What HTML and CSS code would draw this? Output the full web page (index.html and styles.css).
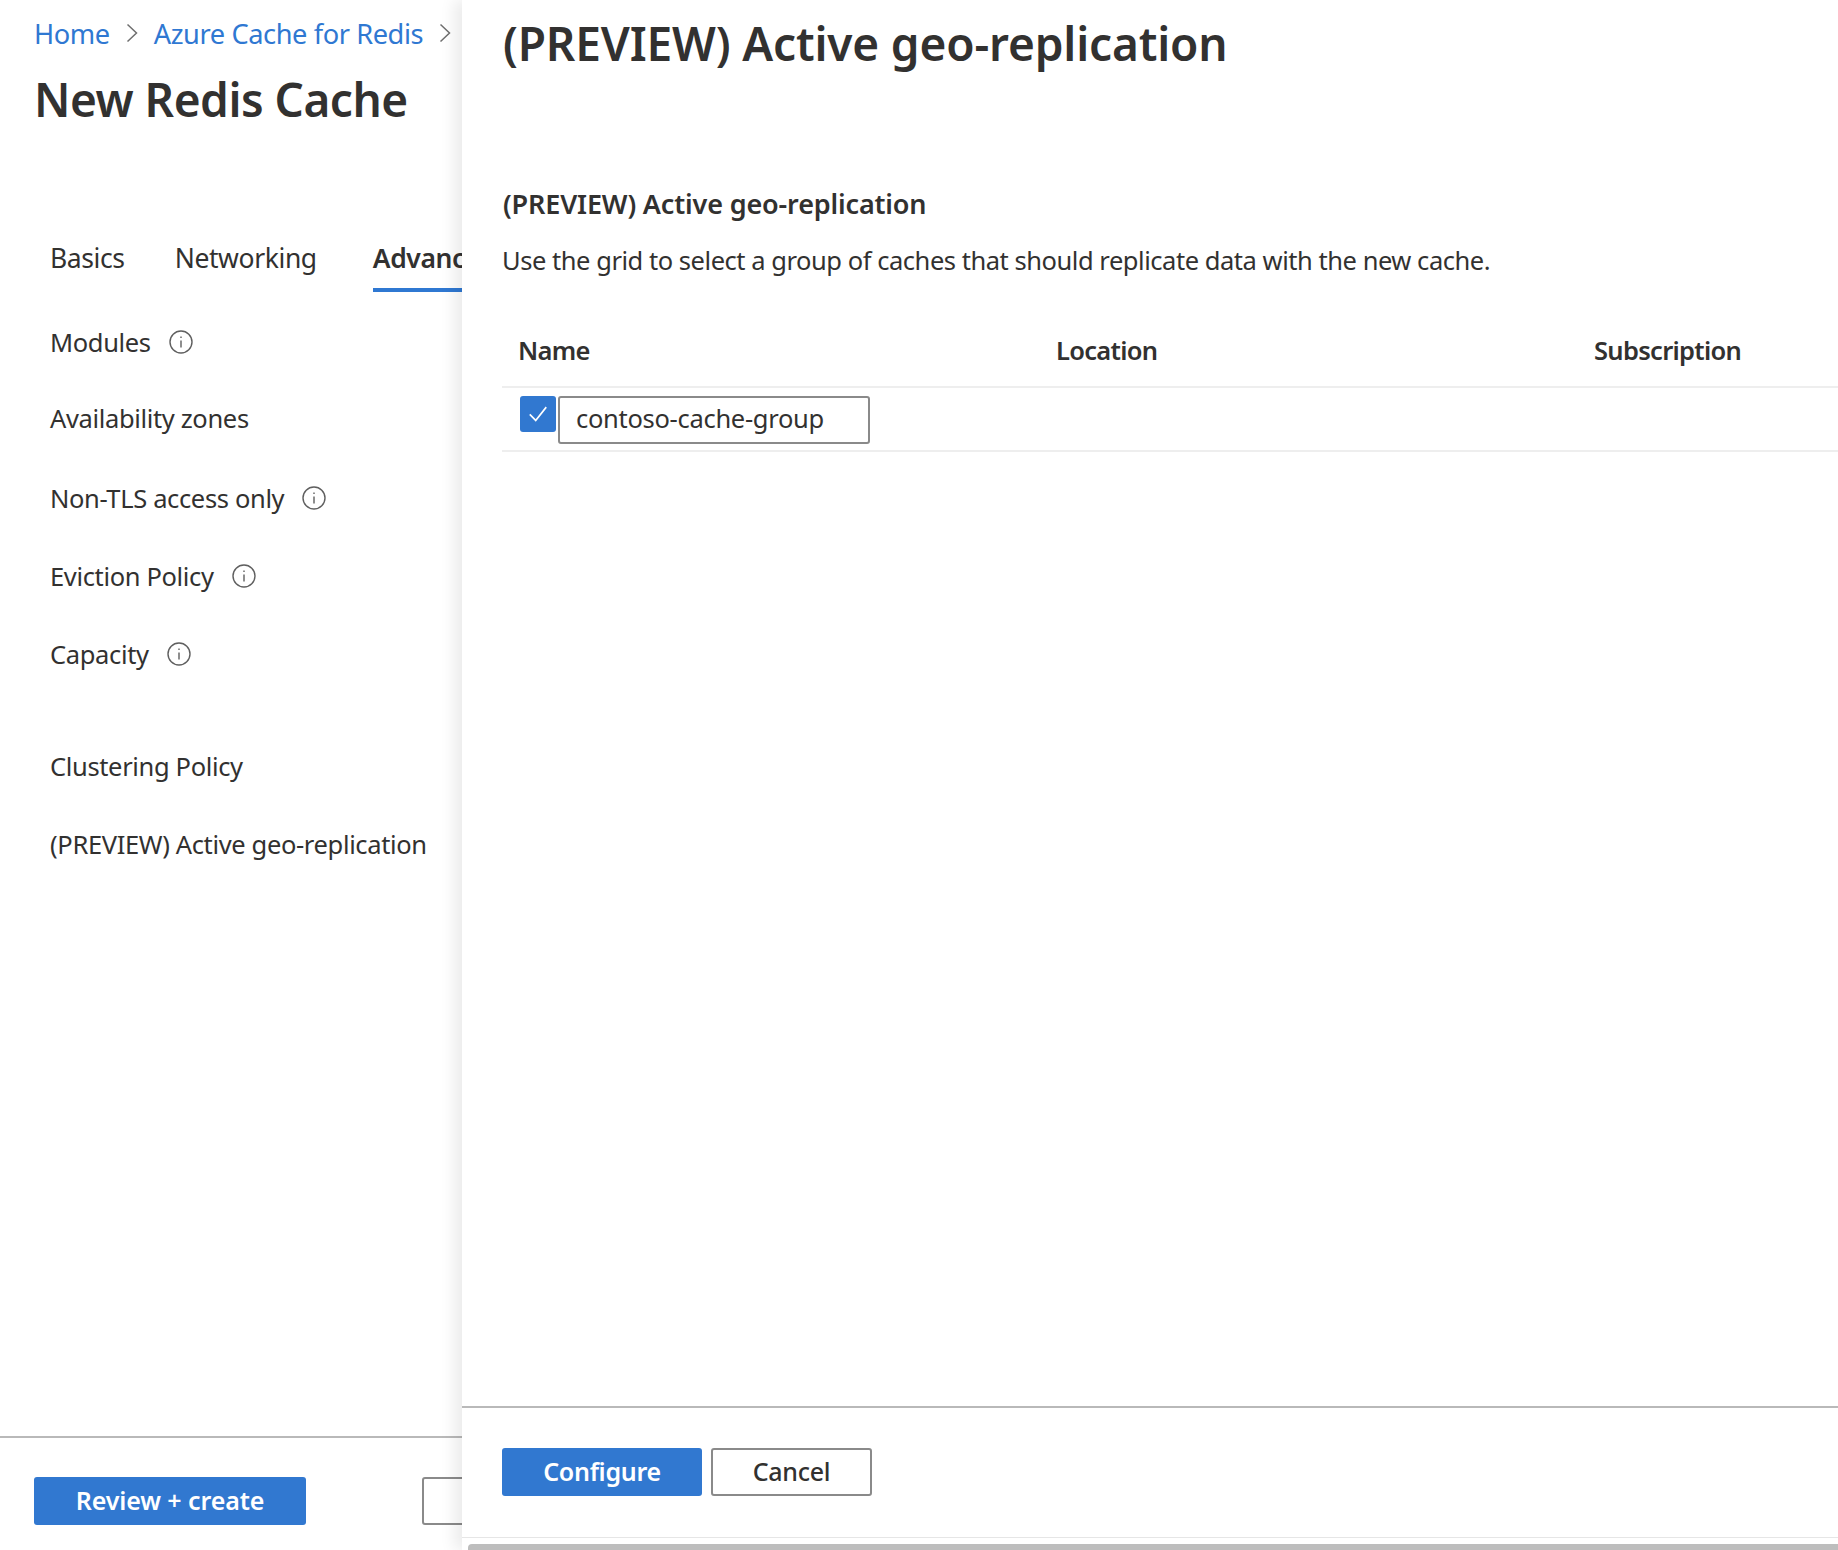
FILE: index.html
```html
<!DOCTYPE html>
<html lang="en">
<head>
<meta charset="utf-8">
<title>New Redis Cache</title>
<link rel="stylesheet" href="styles.css">
</head>
<body>
<div class="page">
  <main class="blade">
    <nav class="crumbs">
      <a class="crumb">Home</a>
      <svg class="chev" viewBox="0 0 12 20"><path d="M1.5 1.5 10.5 10 1.5 18.5"/></svg>
      <a class="crumb">Azure Cache for Redis</a>
      <svg class="chev" viewBox="0 0 12 20"><path d="M1.5 1.5 10.5 10 1.5 18.5"/></svg>
    </nav>
    <h1 class="title">New Redis Cache</h1>
    <div class="tabs">
      <span class="tab">Basics</span>
      <span class="tab">Networking</span>
      <span class="tab tab-on">Advanced</span>
    </div>
    <div class="fields">
      <div class="field field-short"><span>Modules</span><svg class="info" viewBox="0 0 24 24"><circle cx="12" cy="12" r="11"/><path d="M12 10.5v7M12 6.5v1.6"/></svg></div>
      <div class="field field-long"><span>Availability zones</span></div>
      <div class="field"><span>Non-TLS access only</span><svg class="info" viewBox="0 0 24 24"><circle cx="12" cy="12" r="11"/><path d="M12 10.5v7M12 6.5v1.6"/></svg></div>
      <div class="field"><span>Eviction Policy</span><svg class="info" viewBox="0 0 24 24"><circle cx="12" cy="12" r="11"/><path d="M12 10.5v7M12 6.5v1.6"/></svg></div>
      <div class="field field-gap"><span>Capacity</span><svg class="info" viewBox="0 0 24 24"><circle cx="12" cy="12" r="11"/><path d="M12 10.5v7M12 6.5v1.6"/></svg></div>
      <div class="field"><span>Clustering Policy</span></div>
      <div class="field"><span>(PREVIEW) Active geo-replication</span></div>
    </div>
    <footer class="blade-foot">
      <button class="btn btn-primary btn-review">Review + create</button>
      <button class="btn btn-plain btn-prev"></button>
    </footer>
  </main>
  <aside class="panel">
    <h2 class="panel-title">(PREVIEW) Active geo-replication</h2>
    <div class="panel-body">
      <h3 class="section">(PREVIEW) Active geo-replication</h3>
      <p class="desc">Use the grid to select a group of caches that should replicate data with the new cache.</p>
      <div class="grid-head">
        <span>Name</span><span>Location</span><span>Subscription</span>
      </div>
      <div class="grid-row">
        <span class="check"><svg viewBox="0 0 24 24"><path d="M3 12.5 9.5 19 21 4.5"/></svg></span>
        <span class="name-box">contoso-cache-group</span>
      </div>
    </div>
    <footer class="panel-foot">
      <button class="btn btn-primary btn-configure">Configure</button>
      <button class="btn btn-plain btn-cancel">Cancel</button>
    </footer>
    <div class="scroll"><div class="thumb"></div></div>
  </aside>
</div>
</body>
</html>
```
FILE: styles.css
```css
* { box-sizing: border-box; }
html, body { margin: 0; padding: 0; }
body {
  background: #fff;
  color: #323130;
  font-family: "Noto Sans", "Open Sans", sans-serif;
  font-size: 24px;
  overflow: hidden;
}
.page {
  position: relative;
  width: 1838px;
  height: 1550px;
  overflow: hidden;
}
.blade {
  display: flex;
  flex-direction: column;
  width: 480px;
  height: 1550px;
  overflow: hidden;
}
.crumbs {
  display: flex;
  align-items: center;
  gap: 16px;
  height: 34px;
  margin: 16px 0 0 34px;
  white-space: nowrap;
}
.crumb { color: #2f78d2; font-size: 27.2px; letter-spacing: -0.4px; }
.chev { width: 12px; height: 20px; flex: none; }
.chev path { fill: none; stroke: #6e6e6e; stroke-width: 1.5; }
.title {
  margin: 20px 0 0 34px;
  height: 58px;
  line-height: 58px;
  font-size: 46px;
  font-weight: 600;
  letter-spacing: -0.5px;
  white-space: nowrap;
}
.tabs {
  display: flex;
  gap: 50px;
  height: 60px;
  margin: 104px 0 0 50px;
  white-space: nowrap;
}
.tab {
  height: 60px;
  padding-top: 8px;
  font-size: 26.5px;
  letter-spacing: -0.4px;
}
.tab-on {
  margin-left: 6px;
  font-weight: 600;
  border-bottom: 4px solid #2f78d2;
}
.fields {
  display: flex;
  flex-direction: column;
  margin: 28px 0 0 50px;
  flex: 1;
}
.field {
  display: flex;
  align-items: center;
  gap: 18px;
  height: 44px;
  margin-bottom: 34px;
  font-size: 25.5px;
  letter-spacing: -0.35px;
  white-space: nowrap;
}
.field-short { margin-bottom: 32px; }
.field-long { margin-bottom: 36px; }
.field-gap { margin-bottom: 68px; }
.info { width: 24px; height: 24px; flex: none; }
.info circle, .info path { fill: none; stroke: #5f5f5f; stroke-width: 1.4; }
.blade-foot {
  display: flex;
  gap: 116px;
  height: 114px;
  padding: 39px 0 0 34px;
  border-top: 2px solid #b9b9b9;
  flex: none;
}
.btn {
  height: 48px;
  border-radius: 3px;
  font: inherit;
  font-size: 25px;
  letter-spacing: -0.3px;
  padding: 0 0 3px;
  flex: none;
}
.btn-primary {
  background: #3178d0;
  border: 0;
  color: #fff;
  font-weight: 600;
}
.btn-plain {
  background: #fff;
  border: 2px solid #8a8a8a;
  color: #323130;
  font-weight: 500;
}
.btn-review { width: 272px; letter-spacing: -0.1px; }
.btn-prev { width: 120px; }
.panel {
  position: absolute;
  left: 462px;
  top: 0;
  width: 1376px;
  height: 1550px;
  background: #fff;
  box-shadow: -8px 0 14px rgba(0, 0, 0, 0.08);
  display: flex;
  flex-direction: column;
}
.panel-title {
  margin: 10px 0 0 41px;
  height: 66px;
  line-height: 66px;
  font-size: 46px;
  font-weight: 600;
  letter-spacing: -0.16px;
  white-space: nowrap;
}
.panel-body {
  flex: 1;
  margin-left: 40px;
  padding-top: 110px;
}
.section {
  margin: 0 0 0 1px;
  height: 36px;
  line-height: 36px;
  font-size: 27px;
  font-weight: 600;
  letter-spacing: -0.15px;
  white-space: nowrap;
}
.desc {
  margin: 20px 0 0;
  height: 36px;
  line-height: 36px;
  font-size: 25.5px;
  letter-spacing: -0.46px;
  white-space: nowrap;
}
.grid-head {
  display: grid;
  grid-template-columns: 538px 538px 1fr;
  height: 60px;
  margin-top: 50px;
  padding: 4px 0 0 16px;
  border-bottom: 2px solid #eeeeee;
  font-size: 25.5px;
  font-weight: 600;
  letter-spacing: -0.7px;
  line-height: 36px;
  white-space: nowrap;
}
.grid-row {
  display: flex;
  gap: 2px;
  height: 64px;
  padding: 8px 0 0 18px;
  border-bottom: 2px solid #eeeeee;
}
.check {
  display: flex;
  align-items: center;
  justify-content: center;
  width: 36px;
  height: 36px;
  border-radius: 3px;
  background: #3178d0;
  flex: none;
}
.check svg { width: 22px; height: 22px; }
.check path { fill: none; stroke: #fff; stroke-width: 1.8; }
.name-box {
  width: 312px;
  height: 48px;
  padding-left: 16px;
  border: 2px solid #8a8a8a;
  border-radius: 3px;
  font-size: 25.5px;
  letter-spacing: -0.3px;
  line-height: 40px;
  white-space: nowrap;
}
.panel-foot {
  display: flex;
  gap: 9px;
  height: 131px;
  padding: 40px 0 0 40px;
  border-top: 2px solid #b9b9b9;
  flex: none;
}
.btn-configure { width: 200px; }
.btn-cancel { width: 161px; }
.scroll {
  height: 13px;
  padding: 6px 0 0 6px;
  border-top: 1px solid #e6e6e6;
  flex: none;
}
.thumb {
  height: 7px;
  border-radius: 4px 0 0 0;
  background: #bdbdbd;
}
```
